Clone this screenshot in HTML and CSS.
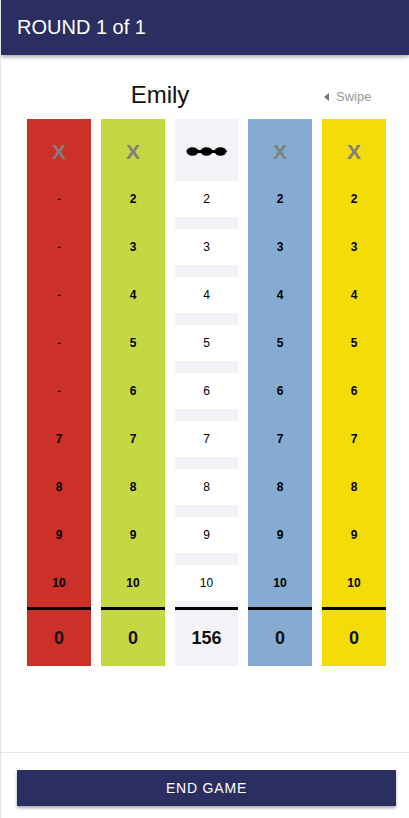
FILE: index.html
```html
<!DOCTYPE html>
<html lang="en">
<head>
    <meta charset="UTF-8">
    <meta name="viewport" content="width=device-width, initial-scale=1.0">
    <title>Round 1 of 1</title>
    <link rel="stylesheet" href="styles.css">
</head>
<body>
    <div class="app">
        <header class="app-bar">ROUND 1 of 1</header>
        <main class="content">
            <div class="player-row">
                <h1 class="player-name">Emily</h1>
                <div class="swipe"><span class="swipe-arrow"></span>Swipe</div>
            </div>
            <div class="board">
                <div class="col col-red">
                    <div class="head"><span class="x">X</span></div>
                    <div class="cell dash">-</div>
                    <div class="cell dash">-</div>
                    <div class="cell dash">-</div>
                    <div class="cell dash">-</div>
                    <div class="cell dash">-</div>
                    <div class="cell">7</div>
                    <div class="cell">8</div>
                    <div class="cell">9</div>
                    <div class="cell last">10</div>
                    <div class="total">0</div>
                </div>
                <div class="col col-green">
                    <div class="head"><span class="x">X</span></div>
                    <div class="cell">2</div>
                    <div class="cell">3</div>
                    <div class="cell">4</div>
                    <div class="cell">5</div>
                    <div class="cell">6</div>
                    <div class="cell">7</div>
                    <div class="cell">8</div>
                    <div class="cell">9</div>
                    <div class="cell last">10</div>
                    <div class="total">0</div>
                </div>
                <div class="col col-white">
                    <div class="head">
                        <svg class="marks" width="42" height="9" viewBox="0 0 42 9">
                            <path d="M0 4 L7 3 L35 3 L42 4 L35 6 L7 6 Z" fill="#000"/>
                            <ellipse cx="6.5" cy="4.5" rx="6" ry="4.2" fill="#000"/>
                            <ellipse cx="20.5" cy="4.5" rx="6" ry="4.2" fill="#000"/>
                            <ellipse cx="34.5" cy="4.5" rx="6" ry="4.2" fill="#000"/>
                        </svg>
                    </div>
                    <div class="cell"><span>2</span></div>
                    <div class="cell"><span>3</span></div>
                    <div class="cell"><span>4</span></div>
                    <div class="cell"><span>5</span></div>
                    <div class="cell"><span>6</span></div>
                    <div class="cell"><span>7</span></div>
                    <div class="cell"><span>8</span></div>
                    <div class="cell"><span>9</span></div>
                    <div class="cell last"><span>10</span></div>
                    <div class="total">156</div>
                </div>
                <div class="col col-blue">
                    <div class="head"><span class="x">X</span></div>
                    <div class="cell">2</div>
                    <div class="cell">3</div>
                    <div class="cell">4</div>
                    <div class="cell">5</div>
                    <div class="cell">6</div>
                    <div class="cell">7</div>
                    <div class="cell">8</div>
                    <div class="cell">9</div>
                    <div class="cell last">10</div>
                    <div class="total">0</div>
                </div>
                <div class="col col-yellow">
                    <div class="head"><span class="x">X</span></div>
                    <div class="cell">2</div>
                    <div class="cell">3</div>
                    <div class="cell">4</div>
                    <div class="cell">5</div>
                    <div class="cell">6</div>
                    <div class="cell">7</div>
                    <div class="cell">8</div>
                    <div class="cell">9</div>
                    <div class="cell last">10</div>
                    <div class="total">0</div>
                </div>
            </div>
        </main>
        <footer class="footer">
            <button type="button" class="end-btn">END GAME</button>
        </footer>
    </div>
</body>
</html>
```

FILE: styles.css
```css
html, body {
    margin: 0;
    height: 100%;
    background-color: #fff;
}
body {
    font-family: "Liberation Sans", Arial, sans-serif;
    color: #000;
}
.app {
    height: 818px;
    display: flex;
    flex-direction: column;
    border-left: 1px solid #e4e4e4;
    overflow: hidden;
}
.app-bar {
    height: 55px;
    flex: none;
    padding-left: 16px;
    display: flex;
    align-items: center;
    background-color: #2a2e60;
    color: #fff;
    font-size: 20px;
    box-shadow: 0 2px 4px rgba(0,0,0,0.35);
}
.content {
    flex: 1;
}
.player-row {
    height: 64px;
    position: relative;
    display: flex;
    justify-content: center;
    align-items: center;
    padding-right: 90px;
}
.player-name {
    margin: 16px 0 0 0;
    font-size: 24px;
    font-weight: normal;
    color: #111;
}
.swipe {
    position: absolute;
    left: 323px;
    top: 34px;
    font-size: 13px;
    color: #999;
    display: flex;
    align-items: center;
}
.swipe-arrow {
    width: 0;
    height: 0;
    margin-right: 7px;
    border-top: 4px solid transparent;
    border-bottom: 4px solid transparent;
    border-right: 5px solid #777;
}
.board {
    display: flex;
    gap: 10px;
    padding-left: 26px;
}
.col {
    width: 64px;
    display: flex;
    flex-direction: column;
    font-size: 12px;
    font-weight: bold;
    text-align: center;
}
.col-red { background-color: #cb3029; }
.col-green { background-color: #c5d743; }
.col-white { background-color: #f2f2f7; width: 63px; font-weight: normal; }
.col-blue { background-color: #85acd0; }
.col-yellow { background-color: #f4dc07; }
.head {
    height: 62px;
    display: flex;
    align-items: center;
    justify-content: center;
}
.x {
    font-size: 21px;
    font-weight: bold;
    color: #808080;
    position: relative;
    top: 2px;
}
.marks {
    position: relative;
    top: 1px;
}
.cell {
    height: 48px;
    line-height: 36px;
}
.cell span {
    display: block;
    height: 36px;
    background-color: #fff;
}
.dash {
    color: rgba(0,0,0,0.7);
}
.cell.last {
    height: 42px;
}
.total {
    height: 56px;
    border-top: 3px solid #000;
    display: flex;
    align-items: center;
    justify-content: center;
    font-size: 18px;
    font-weight: bold;
    color: #111;
}
.footer {
    height: 66px;
    flex: none;
    box-sizing: border-box;
    border-top: 1px solid #e8e8e8;
    padding: 17px 13px 0 16px;
}
.end-btn {
    width: 100%;
    height: 36px;
    border: none;
    background-color: #2a2e60;
    color: #fff;
    font-family: inherit;
    font-size: 14px;
    letter-spacing: 0.8px;
    box-shadow: 0 2px 3px rgba(0,0,0,0.35);
}
```
